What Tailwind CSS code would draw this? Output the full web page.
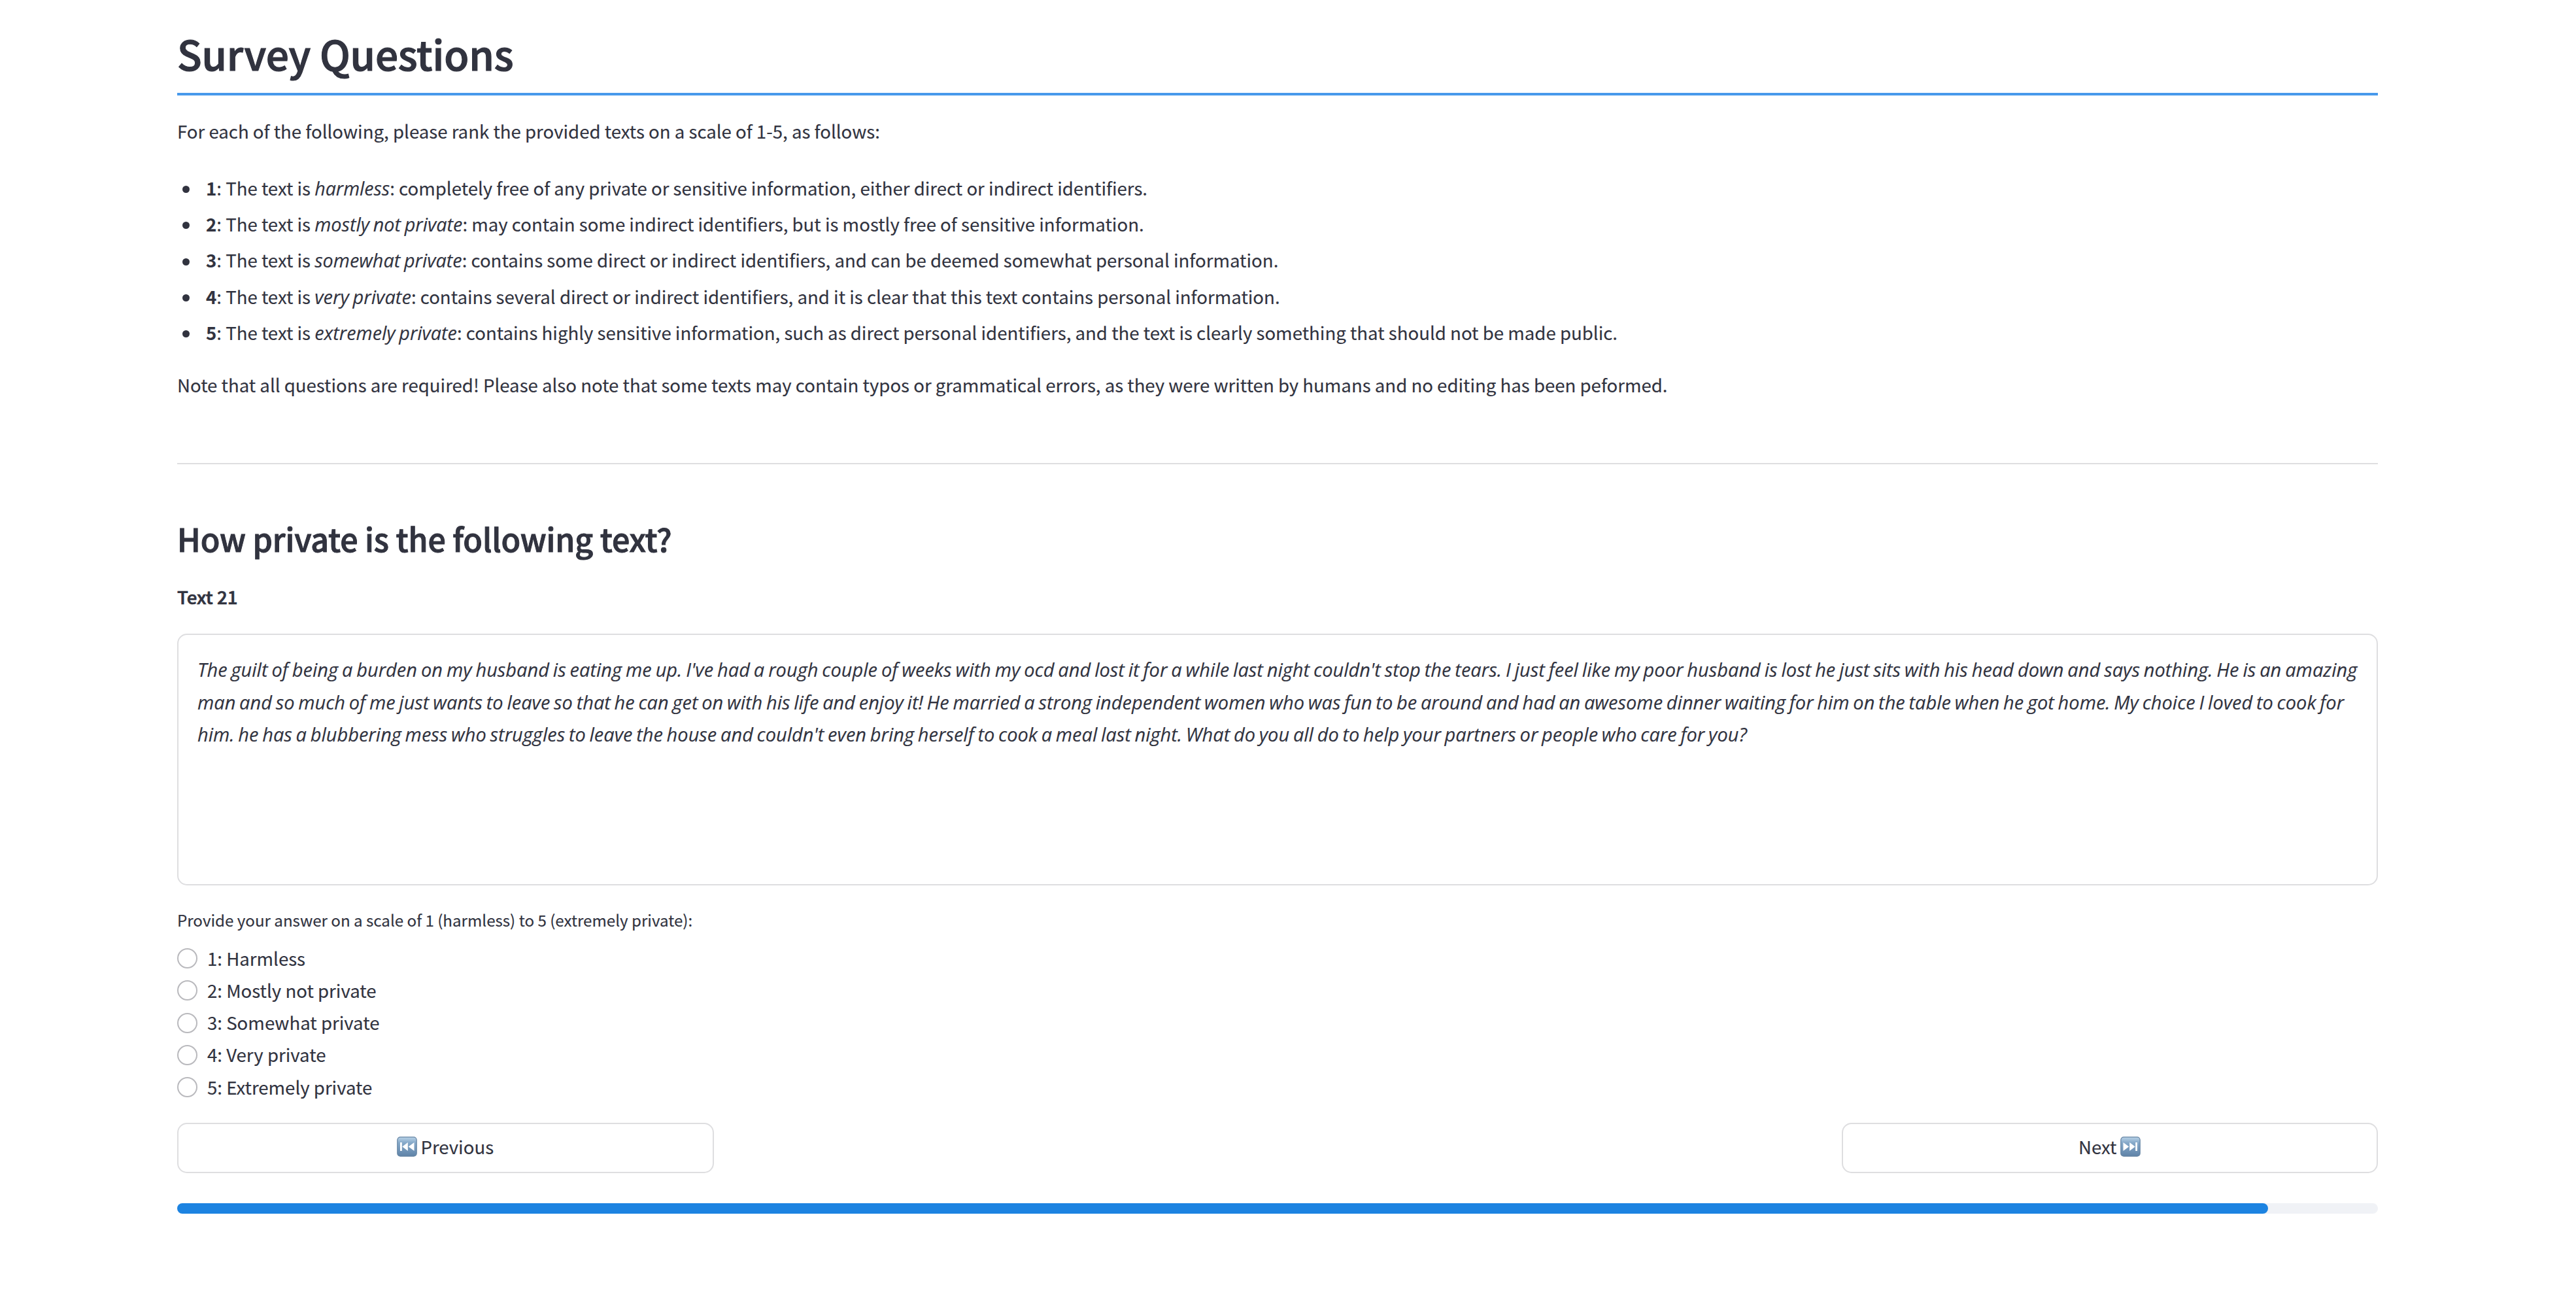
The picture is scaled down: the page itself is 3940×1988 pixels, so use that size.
<!DOCTYPE html>
<html lang="en">
<head>
<meta charset="utf-8">
<title>Survey Questions</title>
<script src="https://cdn.jsdelivr.net/npm/@tailwindcss/browser@4"></script>
</head>
<body class="bg-white text-[#31333f] font-['Noto_Sans_CJK_SC','Open_Sans',sans-serif] text-[27.6px] leading-[50px] [-webkit-text-stroke:0.15px]">
<main class="ml-[271px] flex w-[3366px] flex-col pt-[39px]">
  <h1 class="border-b-4 border-[#4799eb] pb-[19px] text-[62px] leading-[84px] font-medium tracking-[-0.15px] [-webkit-text-stroke:1.2px]">Survey Questions</h1>
  <p class="mt-[29px]">For each of the following, please rank the provided texts on a scale of 1-5, as follows:</p>

  <ul class="mt-[34.6px] pl-2 leading-[55.4px]">
    <li class="flex h-[55.4px] items-center gap-[25px]"><span class="mt-1 size-[11px] rounded-full bg-[#31333f]"></span><span><b class="font-bold">1</b>: The text is <em class="font-['Open_Sans'] text-[28.6px] leading-none [word-spacing:-1.5px]">harmless</em>: completely free of any private or sensitive information, either direct or indirect identifiers.</span></li>
    <li class="flex h-[55.4px] items-center gap-[25px]"><span class="mt-1 size-[11px] rounded-full bg-[#31333f]"></span><span><b class="font-bold">2</b>: The text is <em class="font-['Open_Sans'] text-[28.8px] leading-none [word-spacing:-1.75px]">mostly not private</em>: may contain some indirect identifiers, but is mostly free of sensitive information.</span></li>
    <li class="flex h-[55.4px] items-center gap-[25px]"><span class="mt-1 size-[11px] rounded-full bg-[#31333f]"></span><span><b class="font-bold">3</b>: The text is <em class="font-['Open_Sans'] text-[28.8px] leading-none [word-spacing:-1.75px]">somewhat private</em>: contains some direct or indirect identifiers, and can be deemed somewhat personal information.</span></li>
    <li class="flex h-[55.4px] items-center gap-[25px]"><span class="mt-1 size-[11px] rounded-full bg-[#31333f]"></span><span><b class="font-bold">4</b>: The text is <em class="font-['Open_Sans'] text-[29px] leading-none [word-spacing:-1.75px]">very private</em>: contains several direct or indirect identifiers, and it is clear that this text contains personal information.</span></li>
    <li class="flex h-[55.4px] items-center gap-[25px]"><span class="mt-1 size-[11px] rounded-full bg-[#31333f]"></span><span><b class="font-bold">5</b>: The text is <em class="font-['Open_Sans'] text-[28.8px] leading-none [word-spacing:-1.75px]">extremely private</em>: contains highly sensitive information, such as direct personal identifiers, and the text is clearly something that should not be made public.</span></li>
  </ul>

  <p class="mt-[26.4px] tracking-[-0.01px]">Note that all questions are required! Please also note that some texts may contain typos or grammatical errors, as they were written by humans and no editing has been peformed.</p>
  <hr class="mt-[95px] border-t-2 border-[#dedee0]">

  <h2 class="mt-[83px] text-[48.3px] leading-[60px] font-medium tracking-[-0.15px] [-webkit-text-stroke:1px]">How private is the following text?</h2>
  <p class="mt-[34px] font-medium [-webkit-text-stroke:0.7px]">Text 21</p>

  <section class="mt-8 h-[385px] rounded-[15px] border-2 border-[#dedee0] pt-[28.5px] pl-[29px] font-['Open_Sans'] text-[29px] leading-[49.3px] whitespace-nowrap italic">
    <span class="[word-spacing:-1.62px]">The guilt of being a burden on my husband is eating me up. I've had a rough couple of weeks with my ocd and lost it for a while last night couldn't stop the tears. I just feel like my poor husband is lost he just sits with his head down and says nothing. He is an amazing</span><br>
    <span class="[word-spacing:-1.81px]">man and so much of me just wants to leave so that he can get on with his life and enjoy it! He married a strong independent women who was fun to be around and had an awesome dinner waiting for him on the table when he got home. My choice I loved to cook for</span><br>
    <span class="[word-spacing:-1.81px]">him. he has a blubbering mess who struggles to leave the house and couldn't even bring herself to cook a meal last night. What do you all do to help your partners or people who care for you?</span>
  </section>

  <p class="mt-8 text-[24.13px] leading-[42px]">Provide your answer on a scale of 1 (harmless) to 5 (extremely private):</p>
  <div class="mt-[13px] flex flex-col">
    <label class="flex h-[49.3px] items-center gap-[15px]"><span class="size-[31px] rounded-full border-2 border-[#b9b9bd]"></span><span class="pb-[2px]">1: Harmless</span></label>
    <label class="flex h-[49.3px] items-center gap-[15px]"><span class="size-[31px] rounded-full border-2 border-[#b9b9bd]"></span><span class="pb-[2px]">2: Mostly not private</span></label>
    <label class="flex h-[49.3px] items-center gap-[15px]"><span class="size-[31px] rounded-full border-2 border-[#b9b9bd]"></span><span class="pb-[2px]">3: Somewhat private</span></label>
    <label class="flex h-[49.3px] items-center gap-[15px]"><span class="size-[31px] rounded-full border-2 border-[#b9b9bd]"></span><span class="pb-[2px]">4: Very private</span></label>
    <label class="flex h-[49.3px] items-center gap-[15px]"><span class="size-[31px] rounded-full border-2 border-[#b9b9bd]"></span><span class="pb-[2px]">5: Extremely private</span></label>
  </div>

  <div class="mt-[29.7px] flex justify-between">
    <button class="flex h-[77px] w-[820.5px] items-center justify-center gap-[5px] rounded-[15px] border-2 border-[#dedee0] pb-[5px]">
      <svg class="size-[31px]" viewBox="0 0 31 31"><defs><linearGradient id="key" x1="0" y1="0" x2="0" y2="1"><stop offset="0" stop-color="#b9d3e8"/><stop offset=".3" stop-color="#86a9c9"/><stop offset="1" stop-color="#5f83a8"/></linearGradient></defs><rect x=".8" y=".8" width="29.4" height="29.4" rx="4.5" fill="url(#key)" stroke="#6584a3" stroke-width="1.2"/><path d="M5 9h2.8v13H5zM16.8 9v13L8.3 15.500zM26.500 9v13l-8.700-6.500z" fill="#fff"/></svg>
      <span>Previous</span>
    </button>
    <button class="flex h-[77px] w-[820.5px] items-center justify-center gap-[6px] rounded-[15px] border-2 border-[#dedee0] pb-[5px]">
      <span>Next</span>
      <svg class="size-[31px]" viewBox="0 0 31 31"><rect x=".8" y=".8" width="29.4" height="29.4" rx="4.5" fill="url(#key)" stroke="#6584a3" stroke-width="1.2"/><path d="M26 9h-2.800v13H26zM14.200 9v13l8.500-6.500zM4.500 9v13l8.700-6.500z" fill="#fff"/></svg>
    </button>
  </div>

  <div class="mt-[46px] h-[15.5px] rounded-full bg-[#f0f2f6]"><div class="h-full rounded-full bg-[#1c83e1]" style="width:95%"></div></div>
</main>
</body>
</html>
